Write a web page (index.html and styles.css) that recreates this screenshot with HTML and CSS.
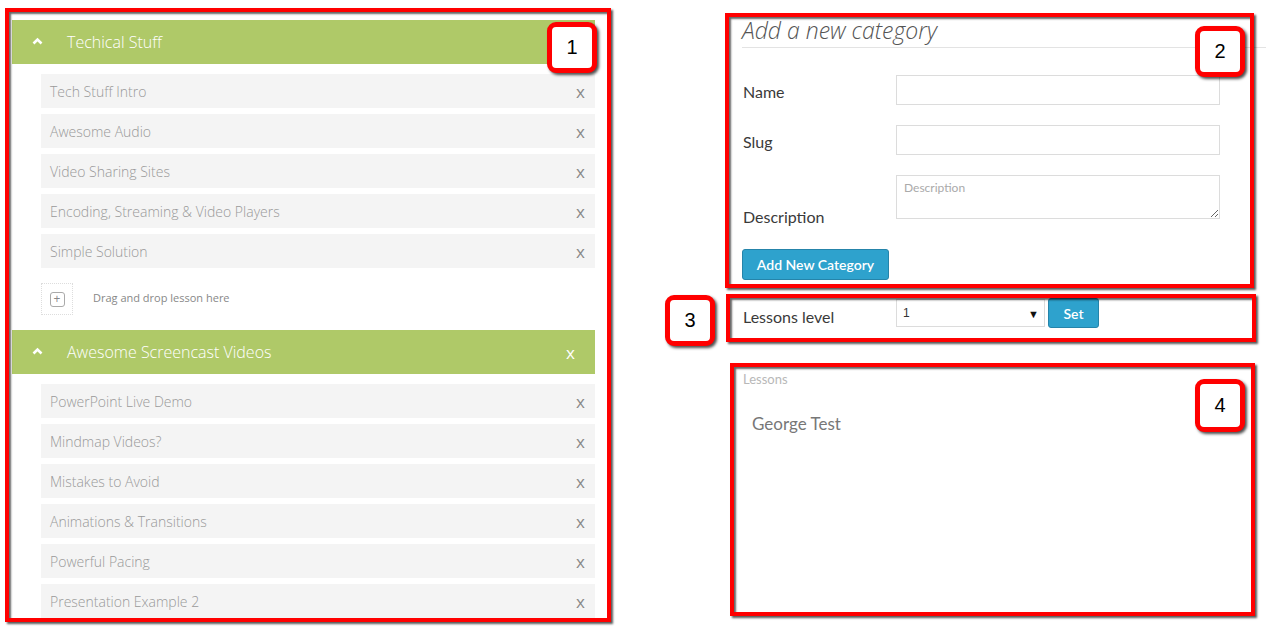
FILE: index.html
```html
<!DOCTYPE html>
<html lang="en">
<head>
<meta charset="UTF-8">
<meta name="viewport" content="width=device-width, initial-scale=1.0">
<link rel="stylesheet" href="styles.css">
<title>Course Lessons</title>
</head>
<body>
<div class="page">
    <div class="course-tree">
        <div class="section">
            <div class="section-head">
                <svg class="chevron" width="11" height="8" viewBox="0 0 11 8"><path d="M1.5 6.5 L5.5 2.5 L9.5 6.5" fill="none" stroke="#fff" stroke-width="2.6"/></svg>
                <span class="section-title">Techical Stuff</span>
            </div>
            <ul class="lessons">
                <li class="lesson"><span>Tech Stuff Intro</span><span class="remove">x</span></li>
                <li class="lesson"><span>Awesome Audio</span><span class="remove">x</span></li>
                <li class="lesson"><span>Video Sharing Sites</span><span class="remove">x</span></li>
                <li class="lesson"><span>Encoding, Streaming &amp; Video Players</span><span class="remove">x</span></li>
                <li class="lesson"><span>Simple Solution</span><span class="remove">x</span></li>
            </ul>
            <div class="drop-zone">
                <div class="drop-box"><span class="plus">+</span></div>
                <span class="drop-text">Drag and drop lesson here</span>
            </div>
        </div>
        <div class="section">
            <div class="section-head">
                <svg class="chevron" width="11" height="8" viewBox="0 0 11 8"><path d="M1.5 6.5 L5.5 2.5 L9.5 6.5" fill="none" stroke="#fff" stroke-width="2.6"/></svg>
                <span class="section-title">Awesome Screencast Videos</span>
                <span class="section-remove">x</span>
            </div>
            <ul class="lessons">
                <li class="lesson"><span>PowerPoint Live Demo</span><span class="remove">x</span></li>
                <li class="lesson"><span>Mindmap Videos?</span><span class="remove">x</span></li>
                <li class="lesson"><span>Mistakes to Avoid</span><span class="remove">x</span></li>
                <li class="lesson"><span>Animations &amp; Transitions</span><span class="remove">x</span></li>
                <li class="lesson"><span>Powerful Pacing</span><span class="remove">x</span></li>
                <li class="lesson"><span>Presentation Example 2</span><span class="remove">x</span></li>
            </ul>
        </div>
    </div>

    <div class="sidebar">
        <h2 class="form-title">Add a new category</h2>
        <form class="category-form">
            <div class="form-row">
                <label for="catName">Name</label>
                <input type="text" id="catName">
            </div>
            <div class="form-row">
                <label for="catSlug">Slug</label>
                <input type="text" id="catSlug">
            </div>
            <div class="form-row form-row-bottom">
                <label for="catDesc">Description</label>
                <textarea id="catDesc" placeholder="Description"></textarea>
            </div>
            <button type="button" class="btn btn-add">Add New Category</button>
        </form>

        <div class="level-row">
            <label for="level">Lessons level</label>
            <div class="select-wrap">
                <select id="level">
                    <option>1</option>
                    <option>2</option>
                    <option>3</option>
                </select>
                <span class="select-arrow">&#9660;</span>
            </div>
            <button type="button" class="btn btn-set">Set</button>
        </div>

        <div class="lesson-box">
            <div class="lesson-box-label">Lessons</div>
            <div class="lesson-name">George Test</div>
        </div>
    </div>
</div>

<!-- annotation overlays -->
<div class="mark mark-1"></div>
<div class="mark mark-2"></div>
<div class="mark mark-3"></div>
<div class="mark mark-4"></div>
<div class="badge badge-1">1</div>
<div class="badge badge-2">2</div>
<div class="badge badge-3">3</div>
<div class="badge badge-4">4</div>
</body>
</html>
```

FILE: styles.css
```css
body {
    margin: 0;
    padding: 0;
    background-color: #ffffff;
    font-family: "Open Sans", Arial, sans-serif;
    position: relative;
    height: 630px;
    overflow: hidden;
}

.page {
    display: flex;
    align-items: flex-start;
}

/* left: course tree */

.course-tree {
    width: 583px;
    margin-left: 12px;
    padding-top: 20px;
}

.section-head {
    height: 44px;
    background-color: #afc968;
    display: flex;
    align-items: center;
    color: #ffffff;
}

.chevron {
    margin-left: 20px;
    margin-top: -2px;
}

.section-title {
    margin-left: 24px;
    font-size: 16px;
    font-weight: 300;
    flex: 1;
}

.section-remove {
    font-size: 17px;
    margin-right: 20px;
}

.lessons {
    list-style: none;
    margin: 10px 0 0 29px;
    padding: 0;
    display: flex;
    flex-direction: column;
    gap: 6px;
}

.lesson {
    height: 34px;
    background-color: #f4f4f4;
    display: flex;
    align-items: center;
    justify-content: space-between;
    padding: 0 10px 0 9px;
    font-size: 14px;
    font-weight: 300;
    color: #999;
}

.lesson .remove {
    font-size: 17px;
    font-weight: 400;
    color: #888;
}

.drop-zone {
    display: flex;
    align-items: center;
    margin: 15px 0 15px 29px;
    gap: 20px;
}

.drop-box {
    width: 30px;
    height: 30px;
    border: 1px dotted #dddddd;
    display: flex;
    align-items: center;
    justify-content: center;
}

.plus {
    width: 13px;
    height: 13px;
    border: 1px solid #aaaaaa;
    border-radius: 3px;
    font-size: 12px;
    line-height: 12px;
    text-align: center;
    color: #888;
}

.drop-text {
    margin-top: -3px;
    font-size: 11px;
    color: #888;
}

/* right: sidebar */

.sidebar {
    flex: 1;
    margin-left: 147px;
}

.form-title {
    margin: 14px 0 0 0;
    font-size: 23px;
    font-style: italic;
    font-weight: 300;
    line-height: 33px;
    color: #555;
    border-bottom: 1px solid #e3e3e3;
}

.category-form {
    padding-top: 27px;
    display: flex;
    flex-direction: column;
    gap: 20px;
    align-items: flex-start;
}

.form-row {
    display: flex;
    align-items: center;
}

.form-row-bottom {
    align-items: flex-end;
}

.form-row label,
.level-row label {
    box-sizing: border-box;
    width: 154px;
    padding-left: 1px;
    font-family: Lato, "Open Sans", sans-serif;
    font-size: 16px;
    color: #3a3a3a;
}

.form-row label {
    padding-top: 2px;
}

.form-row-bottom label {
    margin-bottom: -7px;
}

.form-row input,
.form-row textarea {
    width: 324px;
    height: 30px;
    box-sizing: border-box;
    border: 1px solid #dcdcdc;
    padding: 4px 7px;
    font-family: Lato, sans-serif;
}

.form-row textarea {
    height: 44px;
    font-size: 12px;
    resize: vertical;
}

.form-row textarea::placeholder {
    color: #aaa;
}

.btn {
    background-color: #2ea2cd;
    border: 1px solid #2584aa;
    border-radius: 3px;
    color: #ffffff;
    font-family: Lato, sans-serif;
    font-weight: 600;
    font-size: 14px;
    cursor: pointer;
}

.btn-add {
    width: 147px;
    height: 31px;
    margin-top: 10px;
}

.level-row {
    display: flex;
    align-items: center;
    margin-top: 18px;
    gap: 3px;
}

.level-row label {
    width: 151px;
    padding-top: 6px;
}

.select-wrap {
    position: relative;
}

.select-wrap select {
    appearance: none;
    width: 149px;
    height: 28px;
    border: 1px solid #dcdcdc;
    background: #fff;
    padding: 0 6px;
    font-size: 12px;
    color: #333;
}

.select-arrow {
    position: absolute;
    right: 6px;
    top: 7px;
    font-size: 11px;
    color: #111;
    pointer-events: none;
}

.btn-set {
    width: 51px;
    height: 30px;
}

.lesson-box {
    margin-top: 43px;
    padding-left: 1px;
}

.lesson-box-label {
    font-family: Lato, sans-serif;
    font-size: 13px;
    color: #b8b8b8;
}

.lesson-name {
    margin: 26px 0 0 9px;
    font-family: Lato, sans-serif;
    font-size: 17px;
    color: #777;
}

/* annotations drawn over the screenshot */

.mark {
    position: absolute;
    box-sizing: border-box;
    border: 4px solid #ff0000;
    box-shadow: 2px 2px 2px rgba(0, 0, 0, 0.65), inset 2px 2px 2px rgba(0, 0, 0, 0.6);
    pointer-events: none;
}

.mark-1 { left: 5px; top: 8px; width: 606px; height: 614px; }
.mark-2 { left: 725px; top: 13px; width: 529px; height: 275px; }
.mark-3 { left: 726px; top: 294px; width: 530px; height: 48px; }
.mark-4 { left: 730px; top: 363px; width: 525px; height: 253px; }

.badge {
    position: absolute;
    box-sizing: border-box;
    width: 50px;
    height: 51px;
    background-color: #ffffff;
    border: 5px solid #ff0000;
    border-radius: 9px;
    box-shadow: 2px 2px 3px rgba(0, 0, 0, 0.7);
    display: flex;
    align-items: center;
    justify-content: center;
    font-family: "Liberation Sans", Arial, sans-serif;
    font-size: 20px;
    color: #000;
}

.badge-1 { left: 547px; top: 22px; }
.badge-2 { left: 1195px; top: 26px; }
.badge-3 { left: 665px; top: 295px; }
.badge-4 { left: 1195px; top: 379px; height: 53px; }
```
